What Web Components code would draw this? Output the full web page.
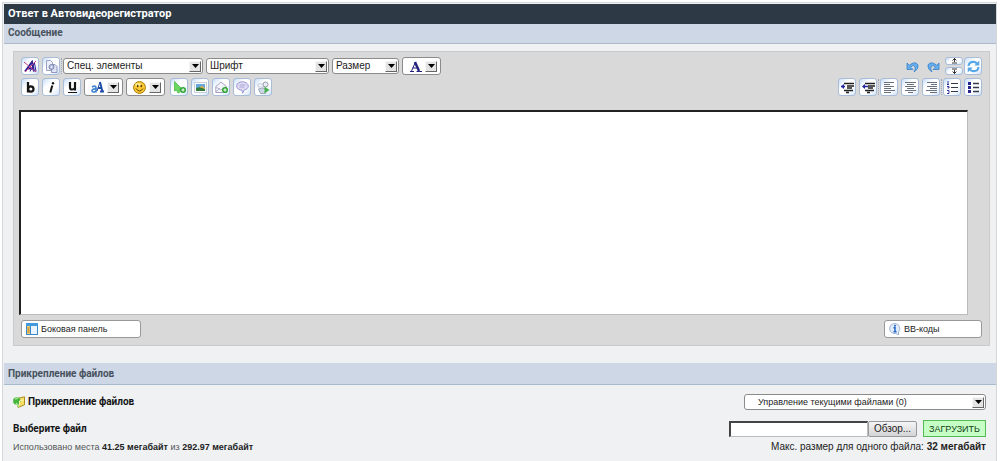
<!DOCTYPE html>
<html lang="ru">
<head>
<meta charset="utf-8">
<title>Ответ в Автовидеорегистратор</title>
<style>
html, body { margin: 0; background: #fff; }
body { font: 11px/16px "Liberation Sans", Arial, sans-serif; color: #222; --narrow: Roboto, "Liberation Sans", sans-serif; }
</style>
</head>
<body>
<reply-page></reply-page>
<script>
const svg = (w, h, body) => `<svg width="${w}" height="${h}" viewBox="0 0 ${w} ${h}" fill="none" aria-hidden="true">${body}</svg>`;
const badge = '<circle cx="10" cy="9" r="3" fill="#28a52c"/><path d="M8.3 9h3.4M10 7.300v3.400" stroke="#fff"/>';
const lines = (rows) => rows.map(([x, w], i) => `<path d="M${x} ${1.5 + i * 2}h${w}" stroke="#68717c"/>`).join('');
const ICONS = {
  clear: svg(13, 13, '<path d="M1 11.500 8 2l2 9.500M4 8.500h5" stroke="#2b2494" stroke-width="2"/><path d="M6 11.500 10.500 3l1.500 8.500" stroke="#2b2494"/><path d="M0 2l12 10M12 1 1 12" stroke="#c63b86"/>'),
  paste: svg(13, 13, '<path d="M1.500.5h4l2 2v8h-6z" fill="#eef0fa" stroke="#98a3c4"/><path d="M6.500 4.500h3.500l2 2v6h-5.500z" fill="#dfe4f4" stroke="#8e98bd"/><circle cx="6.500" cy="7" r="2.500" fill="#b9c3e0" stroke="#8089b3"/><circle cx="6.500" cy="7" r=".8" fill="#fff"/>'),
  bold: svg(13, 13, '<path d="M4 1v10.500" stroke="#151515" stroke-width="2.300"/><ellipse cx="6.800" cy="8" rx="2.700" ry="2.700" stroke="#151515" stroke-width="2.200"/>'),
  italic: svg(13, 13, '<path d="M7.300 4.500 5.300 11.500" stroke="#151515" stroke-width="2"/><circle cx="8" cy="2.200" r="1.200" fill="#151515"/>'),
  under: svg(13, 13, '<path d="M4 1v5.500q0 2 2 2t3-1.500M9 1v8.500" stroke="#151515" stroke-width="2.200"/><path d="M2 11.500h9" stroke="#151515"/>'),
  size: svg(13, 13, '<path d="M1 6q4-2 4 1v4.500M5 8Q1 7.500 1 9.800 1.500 12 5 10.200" stroke="#3f83d0" stroke-width="1.700"/><path d="M6 10 9 1" stroke="#1f4da6"/><path d="M9 1l2.300 9M7 7h3M9 10.500h4" stroke="#1f4da6" stroke-width="1.900"/>'),
  color: svg(13, 13, '<path d="M2.500 11 6.500 2M3.500 8h6" stroke="#23237e"/><path d="M6 2l4 9" stroke="#23237e" stroke-width="2.400"/><path d="M1 11.500h4M7.500 11.500H13" stroke="#23237e"/>'),
  smile: svg(13, 13, '<circle cx="6.500" cy="6.500" r="5.900" fill="#f8c932" stroke="#a97804"/><ellipse cx="5" cy="3.600" rx="3" ry="1.600" fill="#ffeb91"/><ellipse cx="4.700" cy="5" rx=".8" ry="1.200" fill="#543500"/><ellipse cx="8.300" cy="5" rx=".8" ry="1.200" fill="#543500"/><path d="M3 7.500q3.500 5 7 0" stroke="#6d4300"/>'),
  link: svg(13, 13, '<path d="M1.500.5v9.500l2-1L5 12l2-1-1-2.500h3.500z" fill="#6cd860" stroke="#62c25c"/>' + badge),
  image: svg(13, 13, '<rect x=".5" y="1.500" width="12" height="10" fill="#fff" stroke="#c5d0da"/><path d="M2 3h9v4H2z" fill="#65a9df"/><path d="M2 7l4-1 5 1v3H2z" fill="#327d3c"/><path d="M5 6l3-1 3 2v1z" fill="#ddaf4b"/>'),
  mail: svg(13, 13, '<path d="M.8 5.500 6 1l5.500 4.500v6H.8z" fill="#f4f3fb" stroke="#a4a3bd"/><path d="M1 6l5 3 5-3M1 11l4-4" stroke="#b7b6ce"/>' + badge),
  quote: svg(13, 13, '<path d="M6.500.8C3 .8.700 2.500.700 5s2.300 4.200 5.300 4.200l.5 3 2-3.400C11 8.200 12.300 7 12.300 5S10 .8 6.500.8z" fill="#e0dcf5" stroke="#9c98cf"/><path d="M3.500 4h6M3.500 6h5" stroke="#aaa5d8"/>'),
  media: svg(13, 13, '<path d="M1 3h6v3H1z" fill="#f6f8fc" stroke="#c5ccdd"/><circle cx="8.500" cy="3.500" r="2.500" fill="#eceff5" stroke="#8f9aad"/><path d="M1.500 8l4-1 4 1-1 4.500h-5z" fill="#ccd5e2" stroke="#9ca9be"/><path d="M7.500 5.500v7l5-3.500z" fill="#48b04e"/>'),
  undo: svg(13, 13, '<path d="M1 3v6.500h6L4.700 7.200Q7.500 4 9 7q.8 2-1 5 5-3 4-7Q9.500.5 3.300 5.200z" fill="#64aef0" stroke="#3d81c4" stroke-width=".8"/>'),
  refresh: svg(13, 13, '<path d="M1.500 6Q2 1.500 7 1.800q2 .2 3 1.700M11.500 7q-.5 4.500-5.500 4.200-2-.2-3-1.700" stroke="#58a8e6" stroke-width="2.200"/><path d="M12.300.5v5H7.300zM.700 12.500v-5h5z" fill="#58a8e6"/>'),
  up: svg(7, 6, '<path d="M3.500 0v4M1.500 2.500l2-2 2 2M1 5h5" stroke="#333"/>'),
  down: svg(7, 6, '<path d="M1 1h5M3.500 2v4M1.500 3.500l2 2 2-2" stroke="#333"/>'),
  indent: svg(13, 13, '<path d="M0 5.500h4" stroke="#2626a2" stroke-width="1.500"/><path d="M3 3v5L0 5.500z" fill="#2626a2"/><path d="M3 2.500h10M6 5h7M6 7h5M3 9.500h9M5 11.500h3" stroke="#202020" stroke-width="1.300"/>'),
  outdent: svg(13, 13, '<path d="M1 5.500h5" stroke="#2626a2" stroke-width="1.500"/><path d="M3 3v5L0 5.500z" fill="#2626a2"/><path d="M3 2.500h10M6 5h7M6 7h5M3 9.500h9M5 11.500h3" stroke="#202020" stroke-width="1.300"/>'),
  left: svg(13, 13, lines([[1, 10], [1, 6], [1, 10], [1, 7], [1, 11], [1, 7]])),
  center: svg(13, 13, lines([[1, 11], [3, 7], [1, 11], [3, 7], [1, 11], [4, 5]])),
  right: svg(13, 13, lines([[2, 10], [6, 6], [2, 10], [5, 7], [1, 11], [5, 7]])),
  ordered: svg(13, 13, '<path d="M2 0v3M1 3.500h2M1 5.500h2v1.500H1.500M1 9.500h2v3H1" stroke="#31319d"/><path d="M5 2.500h7M5 6.500h7M5 10.500h7" stroke="#333a4a"/>'),
  bullets: svg(13, 13, '<path d="M1 1h3v3H1zM1 5h3v3H1zM1 9h3v3H1z" fill="#24248e"/><path d="M6 2.500h6M6 6.500h6M6 10.500h6" stroke="#333a4a" stroke-width="1.300"/>'),
  panel: svg(12, 12, '<rect x=".5" y=".5" width="11" height="11" fill="#e8f5ff" stroke="#3b88cd"/><path d="M0 0h12v3H0z" fill="#4399df"/><path d="M1 3h3v8H1z" fill="#f5cd6b"/><path d="M4.500 3v8" stroke="#3b88cd"/><path d="M1.500 5h2M1.500 7h2M1.500 9h2" stroke="#a8762f"/>'),
  info: svg(12, 12, '<path d="M6 .6a5 5 0 1 0 1 9.800L9.500 12V9A5 5 0 0 0 6 .6z" fill="#e3edf9" stroke="#a3b6d3"/><circle cx="6" cy="2.700" r="1" fill="#2467cd"/><path d="M4.500 4.800H6v4M4.500 8.700h3" stroke="#2467cd" stroke-width="1.500"/>'),
  attach: svg(12, 12, '<path d="M4.500 2.500 11.500.8v8L5 11.500z" fill="#f8df66" stroke="#a98d1e"/><circle cx="3.800" cy="5" r="3.700" fill="#43b43d"/><path d="M2 3l3-1M3 7l3 4" stroke="#a9e48e" stroke-width="1.500"/><path d="M6.500 9V5l4-1" stroke="#fff5ae"/>'),
  arrow: svg(7, 4, '<path d="M0 0h7L3.500 4z" fill="#000"/>')
};

function define(name, css, html) {
  customElements.define(name, class extends HTMLElement {
    constructor() {
      super();
      this.attachShadow({ mode: 'open' });
    }
    connectedCallback() {
      this.shadowRoot.innerHTML = `<style>*{box-sizing:border-box}button,input,select,textarea{font:inherit;color:inherit;margin:0}svg{display:block;flex:none}${css}</style>${html(this)}`;
    }
  });
}
const label = (el) => el.getAttribute('label') || '';
const arrowCss = '.arrow{display:flex;align-items:center;justify-content:center;width:12px;height:11px;background:#e4e4e4;border:1px solid #f6f6f6;border-right-color:#666;border-bottom-color:#666;pointer-events:none}';
const arrow = `<span class="arrow">${ICONS.arrow}</span>`;

define('ui-icon', ':host{display:block;flex:none}:host([flip]){transform:scaleX(-1)}', (el) => ICONS[el.getAttribute('name')]);

define('tool-button', `
  :host{display:block}
  button{display:flex;align-items:center;justify-content:center;width:18px;height:18px;padding:0;background:linear-gradient(135deg,#c8def9,#fff 35%,#fff 65%,#d2e3f9);border:1px solid #a9bcd8;border-radius:3px}
  :host([plain]) button{background:none;border:0}
  :host([half]) button{height:8px}`,
  (el) => `<button type="button" aria-label="${label(el)}"><slot></slot></button>`);

define('tool-separator', ':host{display:block;width:1px;height:16px;border-left:1px dotted #9aa7bb}', () => '');

define('tool-menu', `
  :host{display:block}
  button{display:flex;align-items:center;justify-content:space-between;width:39px;height:18px;padding:0 3px 0 6px;background:#fff;border:1px solid #8b8b8b;border-radius:3px}
  ${arrowCss}`,
  (el) => `<button type="button" aria-label="${label(el)}"><slot></slot>${arrow}</button>`);

define('tool-select', `
  :host{display:block;min-width:0}
  div{display:grid;align-items:center}
  select{grid-area:1/1;appearance:none;width:100%;height:16px;line-height:14px;padding:0 16px 0 var(--inset,3px);background:#fff;border:1px solid #8b8b8b;border-radius:3px;outline:0}
  .arrow{grid-area:1/1;justify-self:end;margin-right:2px}
  ${arrowCss}`,
  (el) => `<div><select aria-label="${label(el)}"><option>${label(el)}</option></select>${arrow}</div>`);

define('wide-button', `
  :host{display:block}
  button{display:flex;align-items:center;gap:3px;width:100%;height:18px;padding:0 4px;background:#fff;border:1px solid #999;border-radius:3px;font-size:9px;line-height:12px}`,
  () => '<button type="button"><slot></slot></button>');

define('section-bar', `
  :host{display:block;background:#cdd7e5;border-bottom:1px solid #abb9cc;color:#48525e}
  h2{margin:0;padding:1px 4px 2px;font:bold 10px/16px var(--narrow)}
  :host([tall]) h2{padding:3px 4px 2px}`,
  () => '<h2><slot></slot></h2>');

define('editor-toolbar', `
  :host{display:flex;justify-content:space-between;padding:0 7px}
  .group{display:grid;gap:3px}
  .row{display:flex;align-items:center;gap:3px;height:18px}
  .end{justify-content:flex-end}
  .special{width:140px}.font{width:123px}.size{width:67px}
  .inserts{display:flex;gap:3px;margin-left:2px}
  .stack{display:grid;gap:2px}
  .tight{display:flex;align-items:center;gap:1px}
  tool-select{font-size:10px}`,
  () => {
    const b = (icon, text) => `<tool-button label="${text}"><ui-icon name="${icon}"></ui-icon></tool-button>`;
    const m = (icon, text) => `<tool-menu label="${text}"><ui-icon name="${icon}"></ui-icon></tool-menu>`;
    const sep = '<tool-separator></tool-separator>';
    return `
    <div class="group">
      <div class="row">${b('clear', 'Убрать форматирование')}<span class="tight">${b('paste', 'Режим редактора')}${sep}
        <tool-select class="special" label="Спец. элементы"></tool-select></span>
        <tool-select class="font" label="Шрифт"></tool-select>
        <tool-select class="size" label="Размер"></tool-select>${m('color', 'Цвет текста')}</div>
      <div class="row">${b('bold', 'Жирный')}${b('italic', 'Курсив')}${b('under', 'Подчёркнутый')}${m('size', 'Регистр')}${m('smile', 'Смайлы')}
        <span class="inserts">${b('link', 'Ссылка')}${b('image', 'Изображение')}${b('mail', 'Почта')}${b('quote', 'Цитата')}${b('media', 'Медиа')}</span></div>
    </div>
    <div class="group">
      <div class="row end">
        <tool-button plain label="Отменить"><ui-icon name="undo"></ui-icon></tool-button>
        <tool-button plain label="Повторить"><ui-icon name="undo" flip></ui-icon></tool-button>
        <span class="tight"><span class="stack"><tool-button half label="Уменьшить"><ui-icon name="up"></ui-icon></tool-button><tool-button half label="Увеличить"><ui-icon name="down"></ui-icon></tool-button></span>
        ${b('refresh', 'Обновить')}</span></div>
      <div class="row end">${b('indent', 'Отступ')}<span class="tight">${b('outdent', 'Убрать отступ')}${sep}${b('left', 'Влево')}</span>${b('center', 'По центру')}<span class="tight">${b('right', 'Вправо')}${sep}${b('ordered', 'Нумерованный список')}</span>${b('bullets', 'Список')}</div>
    </div>`;
  });

define('message-editor', `
  :host{display:block;margin:7px 6px 17px 9px;padding:5px 0 7px;background:#d9d9d9;border:1px solid #cacaca}
  textarea{display:block;width:calc(100% - 26px);height:205px;margin:14px 0 5px 5px;background:#fff;border:2px solid #222;border-right:1px solid #bbb;border-bottom:1px solid #bbb;border-radius:0;resize:none;outline:0}
  .foot{display:flex;justify-content:space-between;padding:0 7px}
  .side{width:120px}.codes{width:98px}`,
  () => `<editor-toolbar></editor-toolbar>
    <textarea aria-label="Сообщение"></textarea>
    <div class="foot">
      <wide-button class="side"><ui-icon name="panel"></ui-icon>Боковая панель</wide-button>
      <wide-button class="codes"><ui-icon name="info"></ui-icon>BB-коды</wide-button>
    </div>`);

define('file-attachments', `
  :host{display:block;padding:9px 10px 0 9px}
  .row{display:flex;align-items:center;justify-content:space-between;min-height:16px}
  h3,label{display:flex;align-items:center;gap:3px;margin:0;font:bold 10px/16px var(--narrow);color:#151515}
  tool-select{width:242px;font-size:9px;--inset:13px}
  .pick{margin-top:10px}
  .controls{display:flex;align-items:center}
  input{width:139px;height:16px;padding:0 2px;background:#fff;border:2px solid #444;border-right:1px solid #bbb;border-bottom:1px solid #bbb;border-radius:0}
  button{height:16px;padding:0;line-height:12px}
  .browse{width:49px;background:linear-gradient(#f5f5f5,#d4d4d4);border:1px solid #999;border-radius:2px;font-size:10px}
  .send{width:63px;height:17px;margin-left:6px;background:#c5ffc5;border:1px solid #55bb55;font-size:9px;color:#163f16}
  .notes{margin-top:2px;color:#555;font-size:9px}
  b{color:#222}
  .limit{color:#222;font-size:10px}`,
  () => `<div class="row"><h3><ui-icon name="attach"></ui-icon>Прикрепление файлов</h3><tool-select label="Управление текущими файлами (0)"></tool-select></div>
    <div class="row pick"><label for="file">Выберите файл</label>
      <span class="controls"><input id="file" type="text"><button type="button" class="browse">Обзор...</button><button type="submit" class="send">ЗАГРУЗИТЬ</button></span></div>
    <div class="row notes"><span>Использовано места <b>41.25 мегабайт</b> из <b>292.97 мегабайт</b></span>
      <span class="limit">Макс. размер для одного файла: <b>32 мегабайт</b></span></div>`);

define('reply-page', `
  :host{display:block;padding:2px 3px 0 2px}
  main{min-height:calc(100vh - 2px);padding:1px 0 0 1px;border:1px solid #d4d6d9;border-bottom:0;box-sizing:border-box;background:#eff1f3}
  h1{margin:0;padding:2px 4px;background:#2d3945;color:#fff;font:bold 11px/16px var(--narrow)}`,
  () => `<main>
    <h1>Ответ в Автовидеорегистратор</h1>
    <section-bar>Сообщение</section-bar>
    <message-editor></message-editor>
    <section-bar tall>Прикрепление файлов</section-bar>
    <file-attachments></file-attachments>
  </main>`);
</script>
</body>
</html>
